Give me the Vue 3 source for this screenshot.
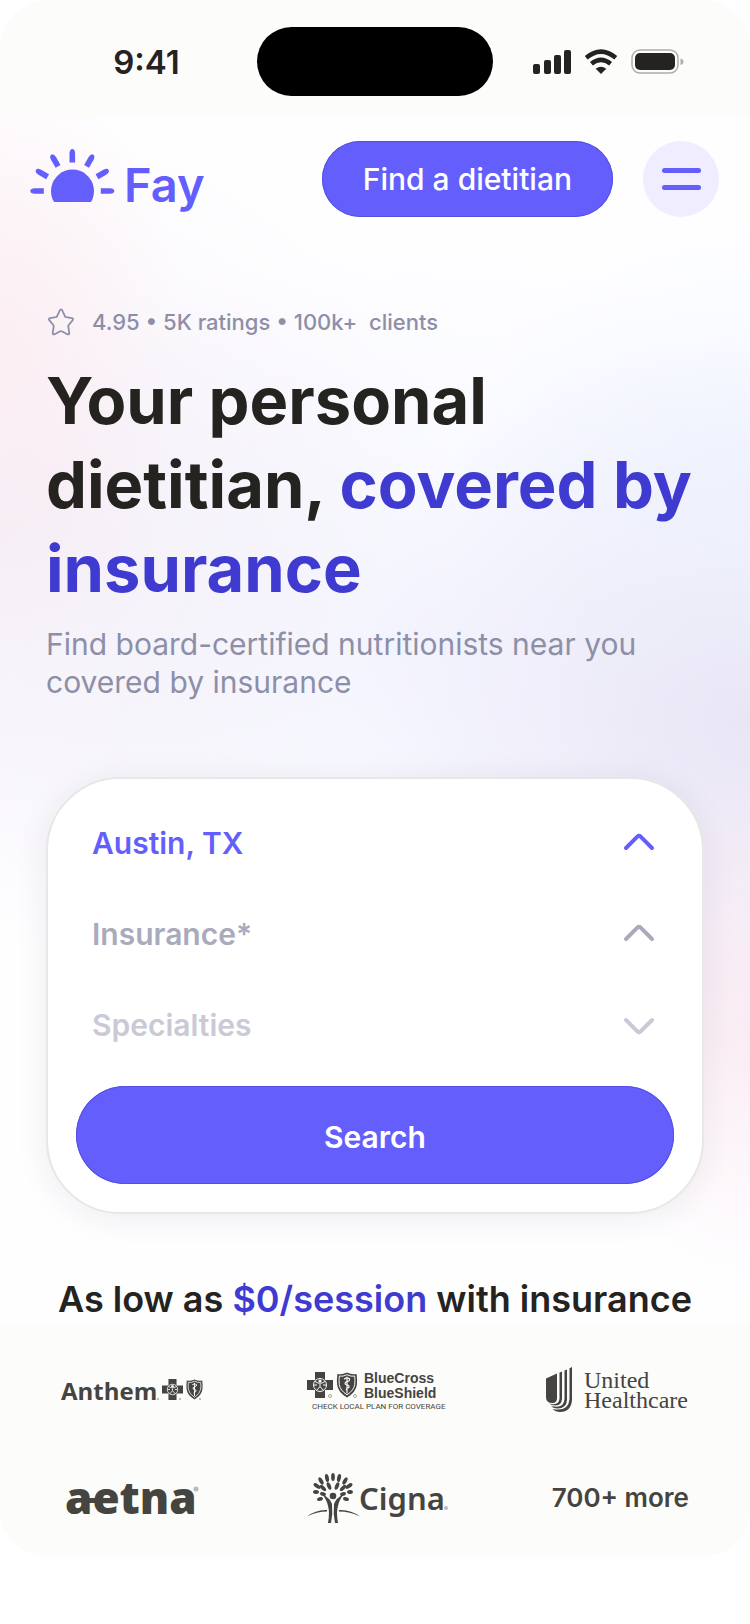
<script setup>
import { ref } from 'vue'

const fields = ref([
  { id: 'location', label: 'Location', value: 'Austin, TX', options: ['Austin, TX', 'Dallas, TX'], tone: 'active', open: true },
  { id: 'insurance', label: 'Insurance', value: 'Insurance*', options: ['Insurance*', 'Aetna', 'Cigna'], tone: 'muted', open: true },
  { id: 'specialties', label: 'Specialties', value: 'Specialties', options: ['Specialties', 'Weight', 'Diabetes'], tone: 'faint', open: false }
])

const rays = [-90, -60, -30, 0, 30, 60, 90]

const leaves = [
  [38, 8, 0, 4], [32, 9, -12, 4], [44, 9, 12, 4], [26, 12, -30, 4], [50, 12, 30, 4],
  [22, 17, -55, 4], [54, 17, 55, 4], [34, 17, -22, 4], [42, 17, 22, 4],
  [28, 19, -45, 4], [48, 19, 45, 4], [21, 23, -85, 3], [55, 23, 85, 3],
  [28, 25, -75, 3], [48, 25, 75, 3], [25, 30, -105, 3], [51, 30, 105, 3]
]
</script>

<template>
  <div class="screen">
    <div class="status">
      <div class="time">9:41</div>
      <div class="island"></div>
      <svg class="signals" width="160" height="34" viewBox="0 0 160 34" aria-hidden="true">
        <g fill="#24231f">
          <rect x="3" y="19" width="7" height="10" rx="2" />
          <rect x="14" y="15" width="7" height="14" rx="2" />
          <rect x="24" y="10" width="7" height="19" rx="2" />
          <rect x="34" y="5" width="7" height="24" rx="2" />
          <path d="M71 29l-5.300-5.200q5.300-4.200 10.600 0z" />
          <rect x="105" y="8" width="40" height="17" rx="5" />
        </g>
        <g fill="none" stroke="#24231f" stroke-width="4.500">
          <path d="M56.200 12.800q14.800-12.400 29.600 0" />
          <path d="M61.400 18.800q9.600-8 19.200 0" />
        </g>
        <rect x="102" y="5" width="46" height="23" rx="8" fill="none" stroke="#adadab" stroke-width="1.500" />
        <path d="M150.500 13.500q3 .8 3 3.200t-3 3.200z" fill="#adadab" />
      </svg>
    </div>

    <main class="hero">
      <header class="bar">
        <a class="brand" href="#" aria-label="Fay home">
          <svg width="184" height="76" viewBox="0 0 184 76">
            <g fill="#645ffc">
              <path d="M24 61a21.500 21.500 0 1 1 37 0z" />
              <path
                v-for="angle in rays"
                :key="angle"
                d="M39.500 21.500V12.500q.2-4.500 2.800-4.500t2.800 4.500v9z"
                :transform="`rotate(${angle} 42.300 50)`"
              />
              <text class="brand-name" x="94" y="61">Fay</text>
            </g>
          </svg>
        </a>
        <div class="actions">
          <button class="find" type="button">Find a dietitian</button>
          <button class="menu" type="button" aria-label="Menu"><span></span><span></span></button>
        </div>
      </header>

      <section class="intro">
        <p class="rating">
          <svg width="28" height="28" viewBox="-1 0 28 28" fill="none" stroke="#8d8fa8" stroke-width="1.800" stroke-linejoin="round" aria-hidden="true">
            <path d="M12.700 2.500Q14 .2 15.300 2.500L17.900 8.200Q18.400 9 19.300 9.200L24.800 10.100Q27 10.600 25.500 12.400L21.700 17Q21.200 17.700 21.300 18.600L22.300 24.800Q22.400 27 20.300 26.200L15.300 23.500Q14 22.900 12.700 23.500L7.700 26.200Q5.600 27 5.700 24.800L6.700 18.600Q6.800 17.700 6.300 17L2.500 12.400Q1 10.600 3.200 10.100L8.700 9.200Q9.600 9 10.100 8.200Z" />
          </svg>
          <span>4.95 • 5K ratings • 100k+&nbsp; clients</span>
        </p>
        <h1>Your personal<br />dietitian, <em>covered by<br />insurance</em></h1>
        <p class="sub">Find board-certified nutritionists near you<br />covered by insurance</p>
      </section>

      <form class="card" @submit.prevent>
        <label v-for="field in fields" :key="field.id" class="field" :class="field.tone" :for="field.id">
          <select :id="field.id" v-model="field.value" :aria-label="field.label">
            <option v-for="option in field.options" :key="option">{{ option }}</option>
          </select>
          <svg width="34" height="20" viewBox="0 0 34 20" fill="none" stroke="currentColor" stroke-width="4" stroke-linecap="round" stroke-linejoin="round" aria-hidden="true">
            <path :d="field.open ? 'M4 15 15.600 3.400Q17 2 18.400 3.400L30 15' : 'M4 5 15.600 16.600Q17 18 18.400 16.600L30 5'" />
          </svg>
        </label>
        <button class="search" type="submit">Search</button>
      </form>

      <h2>As low as <em>$0/session</em> with insurance</h2>
    </main>

    <section class="partners" aria-label="Accepted insurance">
      <svg width="0" height="0" class="defs" aria-hidden="true">
        <symbol id="cross" viewBox="0 0 26 26">
          <path d="M8 0h10v8h8v10h-8v8H8v-8H0V8h8z" fill="#454440" />
          <g fill="none" stroke="#fcfcfa" stroke-width="1">
            <circle cx="13" cy="13" r="6.500" />
            <path d="M8 9.500q5 3.500 10 0M13 12v2.500l-3.500 4M13 14.500l3.500 4M7 13h3M16 13h3" />
          </g>
          <circle cx="13" cy="9" r="1.600" fill="#fcfcfa" />
        </symbol>
        <symbol id="shield" viewBox="0 0 22 27">
          <path d="M1 2q5 1 10-1.500Q16 3 21 2q.8 6 .3 11-.8 8-10.300 13.500Q1.500 21 .7 13 .2 8 1 2z" fill="#454440" />
          <path d="M3 4.300q4 .6 8-1.500 4 2.100 8 1.500.5 5 0 8.700-.8 6-8 10.700Q3.800 19 3 13q-.5-3.700 0-8.700z" fill="none" stroke="#fcfcfa" />
          <path d="M11 5v17M8 7.500q3-2.500 5.500-.5.8 2.500-2.500 3-3 1-1.500 3 4.500.5 3.500 3-3.500 1-2.500 3" fill="none" stroke="#fcfcfa" stroke-width="1.200" />
        </symbol>
      </svg>

      <svg width="150" height="60" viewBox="0 0 150 60" role="img" aria-label="Anthem">
        <text class="anthem" x="4" y="39">Anthem</text>
        <use href="#cross" x="105" y="18" width="21" height="21" />
        <use href="#shield" x="129" y="18" width="17" height="21" />
        <g class="dot"><circle cx="101" cy="38" r="1" /><circle cx="123" cy="38" r="1" /><circle cx="143" cy="38" r="1" /></g>
      </svg>

      <svg width="160" height="60" viewBox="0 0 160 60" role="img" aria-label="BlueCross BlueShield">
        <use href="#cross" x="12" y="11" width="26" height="26" />
        <use href="#shield" x="41" y="11" width="22" height="26" />
        <text class="blue" x="69" y="22">BlueCross</text>
        <text class="blue" x="69" y="37">BlueShield</text>
        <text class="local" x="17" y="48">CHECK LOCAL PLAN FOR COVERAGE</text>
        <g class="ring"><circle cx="35" cy="35" r="1.500" /><circle cx="60" cy="35" r="1.500" /></g>
      </svg>

      <svg width="150" height="60" viewBox="0 0 150 60" role="img" aria-label="United Healthcare">
        <g fill="#454440">
          <path d="M3 17.500 14 12.500V37q0 5-4.500 5Q3 42 3 36z" />
          <path d="M16.500 11.500 19 10.500V38q-.5 6.500-6.500 6.500-4 0-6.500-2 10 2.500 10.500-5z" />
          <path d="M21.500 9.500 24 8.500V39q-.5 8.500-9.500 8.500-4 0-6.500-2.500 13 3 13.500-7z" />
          <path d="M26.500 7.200 29 6V39q-1 12-12 12-4.500 0-7.500-3 16 3 17-10z" />
        </g>
        <text class="united" x="41" y="27">United</text>
        <text class="united" x="41" y="47">Healthcare</text>
      </svg>

      <svg width="150" height="60" viewBox="0 0 150 60" role="img" aria-label="aetna">
        <text class="aetna" x="8" y="45">aetna</text>
        <path d="M28 29h16v5H28z" fill="#454440" />
        <circle class="reg" cx="139" cy="20" r="2.500" />
      </svg>

      <svg width="160" height="60" viewBox="0 0 160 60" role="img" aria-label="Cigna">
        <g fill="#454440">
          <ellipse v-for="(leaf, i) in leaves" :key="i" :cx="leaf[0]" :cy="leaf[1]" rx="1.900" :ry="leaf[3]" :transform="`rotate(${leaf[2]} ${leaf[0]} ${leaf[1]})`" />
          <circle cx="38" cy="27" r="3.300" />
          <path d="M27 25q8 4 10 10 1 10-1 19h-3q2-11 0-17-1-6-6-12zM49 25q-8 4-10 10-1 10 1 19h3q-2-11 0-17 1-6 6-12z" />
          <path d="M12 47.500q9-7 20-6.500v1.500q-10 0-20 5zM65 47.500q-9-7-21-6.500v1.500q11 0 21 5z" />
        </g>
        <text class="cigna" x="64" y="41">Cigna</text>
        <circle class="reg" cx="151" cy="39" r="2" />
      </svg>

      <p class="more">700+ more</p>
    </section>
  </div>
</template>

<style>
body {
  background: #fff;
}
</style>

<style scoped>
.screen {
  font-family: Inter, "Liberation Sans", sans-serif;
  color: #24231f;
  overflow: hidden;
  border-radius: 48px;
}
p, h1, h2 {
  margin: 0;
}
em {
  font-style: normal;
  color: #403bd0;
}
button {
  border: 0;
  font-family: inherit;
  cursor: pointer;
}
.status {
  display: grid;
  grid-template-columns: 1fr 236px 1fr;
  align-items: center;
  padding: 27px 0 22px;
  background: #fcfcfa;
}
.time {
  padding-left: 36px;
  font-size: 33px;
  font-weight: 600;
  line-height: 40px;
  text-align: center;
}
.island {
  height: 69px;
  border-radius: 35px;
  background: #000;
}
.signals {
  justify-self: center;
  display: block;
  padding-right: 24px;
}
.hero {
  padding-bottom: 2px;
  background:
    radial-gradient(ellipse 180px 300px at 0% 19%, rgba(254, 230, 236, .5), transparent),
    radial-gradient(ellipse 460px 420px at 0% 34%, rgba(240, 231, 241, .6), transparent),
    radial-gradient(ellipse 300px 240px at 100% 29%, rgba(234, 241, 255, .6), transparent),
    radial-gradient(ellipse 180px 260px at 100% 75%, rgba(250, 228, 238, .65), transparent),
    radial-gradient(ellipse 400px 380px at 100% 50%, rgba(225, 220, 241, .7), transparent),
    radial-gradient(ellipse 560px 400px at 55% 44%, rgba(241, 243, 255, .75), transparent),
    #fefeff;
}
.bar {
  display: flex;
  justify-content: space-between;
  align-items: center;
  padding: 23px 31px 0 30px;
}
.brand svg {
  display: block;
}
.brand-name {
  font-size: 47px;
  font-weight: 600;
}
.actions {
  display: flex;
  gap: 30px;
}
.find,
.search {
  color: #fff;
  background: #645ffc;
  box-shadow: inset 0 0 0 1px #554fe0;
  font-size: 30px;
}
.find {
  height: 76px;
  padding: 0 41px;
  border-radius: 38px;
  font-weight: 500;
}
.menu {
  display: flex;
  flex-direction: column;
  align-items: center;
  justify-content: center;
  gap: 12px;
  width: 76px;
  height: 76px;
  padding: 0;
  border-radius: 50%;
  background: #efedff;
}
.menu span {
  width: 39px;
  height: 5px;
  border-radius: 3px;
  background: #645ffc;
}
.intro {
  padding: 87px 46px 0;
}
.rating {
  display: flex;
  align-items: center;
  gap: 18px;
  height: 36px;
  font-size: 22px;
  font-weight: 500;
  color: #8d8fa8;
}
h1 {
  padding-top: 19px;
  font-size: 65px;
  line-height: 84px;
  font-weight: 700;
  white-space: nowrap;
}
.sub {
  padding-top: 14px;
  font-size: 30px;
  line-height: 38px;
  color: #8d8fa8;
  white-space: nowrap;
}
.card {
  display: flex;
  flex-direction: column;
  margin: 76px 46px 0;
  padding: 18px 28px 28px;
  border: 2px solid #e9e7e5;
  border-radius: 74px;
  background: #fff;
  box-shadow: 0 4px 32px rgba(40, 35, 60, .08);
}
.field {
  display: flex;
  align-items: center;
  height: 91px;
  position: relative;
  padding: 0 16px;
}
.field select {
  width: 100%;
  height: 60px;
  padding: 0;
  border: 0;
  appearance: none;
  background: transparent;
  color: inherit;
  font-family: inherit;
  font-size: 30px;
  font-weight: 600;
  line-height: 40px;
  opacity: 1;
}
.field svg {
  position: absolute;
  right: 18px;
  pointer-events: none;
}
.active {
  color: #645ffc;
}
.muted {
  color: #a9abbd;
}
.faint {
  color: #c9cad6;
}
.search {
  height: 98px;
  margin-top: 16px;
  padding-top: 4px;
  border-radius: 49px;
  font-weight: 600;
}
h2 {
  padding-top: 61px;
  font-size: 36px;
  line-height: 48px;
  font-weight: 600;
  text-align: center;
  white-space: nowrap;
}
.partners {
  display: grid;
  grid-template-columns: repeat(3, 1fr);
  grid-auto-rows: 108px;
  place-items: center;
  padding: 12px 10px 4px;
  background: #fcfcfa;
  color: #454440;
}
.partners > svg {
  overflow: visible;
}
.partners text {
  fill: #454440;
}
.defs {
  position: absolute;
}
.dot {
  fill: #aaa9a5;
}
.ring {
  fill: none;
  stroke: #aaa9a5;
}
.reg {
  fill: #bbbab7;
}
.anthem {
  font: 700 24px "Open Sans", sans-serif;
}
.blue {
  font: 700 14px "Liberation Sans", sans-serif;
}
.local {
  font: 8px Roboto, "Liberation Sans", sans-serif;
}
.united {
  font: 24px "Liberation Serif", serif;
}
.aetna {
  font: 900 44px "Noto Sans", "Open Sans", sans-serif;
}
.cigna {
  font: 600 31px "Noto Sans", sans-serif;
}
.more {
  padding: 0 0 4px 4px;
  font-size: 26px;
  font-weight: 600;
}
</style>
